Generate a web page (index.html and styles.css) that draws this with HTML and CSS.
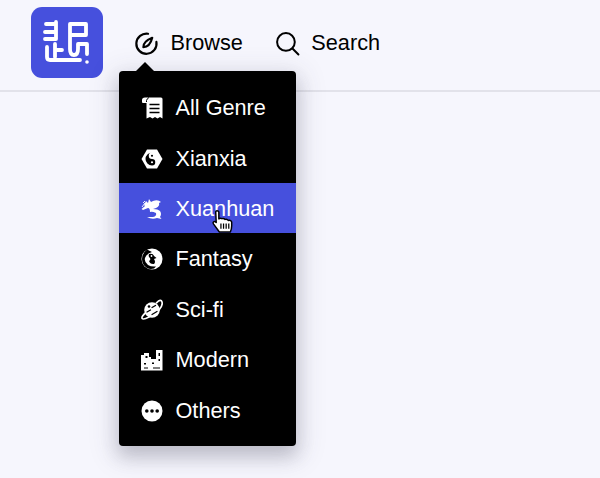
FILE: index.html
```html
<!DOCTYPE html>
<html lang="en">
<head>
<meta charset="utf-8">
<title>Browse</title>
<link rel="stylesheet" href="styles.css">
</head>
<body>
<header class="topbar">
  <a class="logo" href="#" aria-label="Logo">
    <svg viewBox="0 0 72 71" width="72" height="71" fill="none" stroke="#fff" stroke-width="3.800" stroke-linecap="round" stroke-linejoin="round">
      <path d="M15 17H25M14 25H25M14 32H25V15"/>
      <path d="M24 37V50M24 43H31M16 40V50Q16 53 19 53H49"/>
      <path d="M39 28H55V17H39V42Q39 48 43 48T47 42V37H56V47"/>
      <circle cx="56" cy="55" r="1.800" fill="#fff" stroke="none"/>
    </svg>
  </a>
  <nav class="nav">
    <a class="nav-link" href="#">
      <svg class="nav-icon" viewBox="0 0 24 24" fill="none" stroke="#000" stroke-width="2.100" stroke-linecap="round" stroke-linejoin="round"><path d="M13.500 2.600A9.700 9.700 0 1 0 21.500 10.500"/><path d="M9 15.500C8.800 12 11.500 9 17.500 6.500C16 12.500 13.500 15.500 9 15.500Z"/></svg>
      Browse
    </a>
    <a class="nav-link" href="#">
      <svg class="nav-icon" viewBox="0 0 24 24" fill="none" stroke="#000" stroke-width="1.900" stroke-linecap="round"><circle cx="10.500" cy="10.500" r="8.500"/><path d="M17 17L22.500 22.500"/></svg>
      Search
    </a>
  </nav>
  <div class="menu">
    <a class="item" href="#"><svg class="item-icon" viewBox="0 0 22 22"><path fill="#fff" d="M1 3Q1 0.500 4 0.500H20Q21.500 0.500 21.500 2V21.500L19 20L16.500 21.500L14 20L11.500 21.500L9 20L5.500 21.500V6H2Q1 6 1 5Z"/><path stroke="#000" stroke-width="1.600" d="M8.500 7.500H18.500M8.500 11.500H18.500M8.500 15.500H18.500"/><path stroke="#000" stroke-width="1" fill="none" d="M5.500 5V3.500Q6 1.500 8 0.500"/></svg>All Genre</a>
    <a class="item" href="#"><svg class="item-icon" viewBox="0 0 22 22"><path fill="#fff" d="M6 1.500H16L21.500 11L16 20.500H6L0.500 11Z"/><path fill="#000" d="M11 4.500A6.500 6.500 0 0 0 11 17.500A3.250 3.250 0 0 0 11 11A3.250 3.250 0 0 1 11 4.500Z"/><circle cx="11" cy="7.750" r="1.100" fill="#000"/><circle cx="11" cy="14.250" r="1.100" fill="#fff"/></svg>Xianxia</a>
    <a class="item item-active" href="#"><svg class="item-icon" viewBox="0 0 22 22"><path fill="#fff" d="M3 7L5 3L7 5L8 1L10 4L12 3Q17 1 20 4L18 5Q19 8 15 10L12 11Q17 11 19 13Q21 16 19 19L20.500 21L16 20Q11 22 6 19L12 19Q16 18 15 15Q11 13 9 14Q9 10 7 10L2 12L0.500 11L4 8Z"/><path stroke="#fff" stroke-width=".9" d="M1 9L4 5M2 5L4 3"/></svg>Xuanhuan<svg class="cursor" viewBox="0 0 20 22"><path fill="#fff" stroke="#000" stroke-width="1.400" stroke-linejoin="round" d="M3.500 2Q3.500 .8 4.800 .8T6.500 2V8.500Q8 7.300 9.500 8.300Q11.200 7.500 12.500 9Q14.500 8.300 15.500 10Q18 9.500 18.800 11.500V15Q18.800 18 17.500 21H7L1.500 13.500Q.5 12 1.500 11.200T4 12L3.500 2Z"/><path stroke="#000" stroke-width="1.200" d="M8.500 13V18M11 13V18M13.500 13V18M16 13V18"/></svg></a>
    <a class="item" href="#"><svg class="item-icon" viewBox="0 0 22 22"><circle cx="11" cy="11" r="10.500" fill="#fff"/><path fill="#000" d="M6 1.500Q1 5 1 11T6 20Q9 21.500 13 20.500L15 18.500Q10 19 7 17Q3 14 4 10Q6 5 11 4Z"/><path fill="#000" d="M8 6Q12 5 13 8L15.500 10L13 11Q15 14 13 16Q9 16.500 8 13Q10 12 9 10Q7 9 8 6Z"/><circle cx="10.500" cy="8" r=".9" fill="#fff"/></svg>Fantasy</a>
    <a class="item" href="#"><svg class="item-icon" viewBox="0 0 22 22"><circle cx="11" cy="11" r="7.800" fill="#fff"/><path fill="none" stroke="#fff" stroke-width="1.700" stroke-linecap="round" d="M4.500 14Q0 18 1.200 19.500T8 18Q14 15.500 18 11T21 3T15.500 3.800"/><path stroke="#000" stroke-width="1.300" stroke-linecap="round" d="M6 13L9.500 11M11 15.500L16 12.500M11 8.500L14.500 6.500"/><circle cx="8" cy="7.500" r="1.300" fill="#000"/></svg>Sci-fi</a>
    <a class="item" href="#"><svg class="item-icon" viewBox="0 0 22 22"><path fill="#fff" d="M0 6H3V4H8V8H10V10H15V1H21.500V21.500H0Z"/><path fill="#000" d="M4.500 7H6.500V9H4.500ZM17.500 4H19V7H17.500ZM17.500 10H19V12H17.500ZM3 14H5V15.500H3ZM11 13.500H13V15H11ZM3 18.500H7V19.500H3ZM12 18.500H19V19.500H12Z"/></svg>Modern</a>
    <a class="item" href="#"><svg class="item-icon" viewBox="0 0 22 22"><circle cx="11" cy="11" r="10.500" fill="#fff"/><circle cx="5.800" cy="11" r="1.800" fill="#000"/><circle cx="11" cy="11" r="1.800" fill="#000"/><circle cx="16.200" cy="11" r="1.800" fill="#000"/></svg>Others</a>
  </div>
</header>
</body>
</html>
```
FILE: styles.css
```css
* { box-sizing: border-box; }
html, body { margin: 0; height: 100%; }
body {
  background: #f6f6fd;
  color: #000;
  font-family: "Liberation Sans", Arial, sans-serif;
  font-size: 21.7px;
  overflow: hidden;
}
a { color: inherit; text-decoration: none; }
.topbar {
  position: relative;
  display: flex;
  align-items: flex-start;
  height: 92px;
  padding: 7px 0 0 31px;
  border-bottom: 2px solid #e2e2ea;
}
.logo {
  display: flex;
  width: 72px;
  height: 71px;
  border-radius: 11px;
  background: #4650dd;
}
.nav {
  display: flex;
  gap: 32px;
  margin: 23px 0 0 31px;
}
.nav-link {
  display: flex;
  align-items: center;
  gap: 11.500px;
  height: 26px;
}
.nav-icon { width: 25px; height: 25px; flex: none; }
.menu {
  position: absolute;
  left: 119px;
  top: 71px;
  width: 177px;
  height: 375px;
  padding: 11px 0;
  border-radius: 4px;
  background: #000;
  color: #fff;
  box-shadow: 0 10px 18px rgba(60, 60, 80, .24), 0 6px 26px 8px rgba(60, 60, 90, .1);
}
.menu::before {
  content: "";
  position: absolute;
  left: 17px;
  top: -9px;
  border: 9px solid transparent;
  border-top: 0;
  border-bottom-color: #000;
}
.item {
  position: relative;
  display: flex;
  align-items: center;
  gap: 12.500px;
  height: 50.4px;
  padding: 2px 0 0 22px;
}
.item-active { background: #4650dd; }
.item-icon { width: 22px; height: 22px; flex: none; }
.cursor {
  position: absolute;
  left: 93px;
  top: 27px;
  width: 21px;
  height: 23px;
}
```
